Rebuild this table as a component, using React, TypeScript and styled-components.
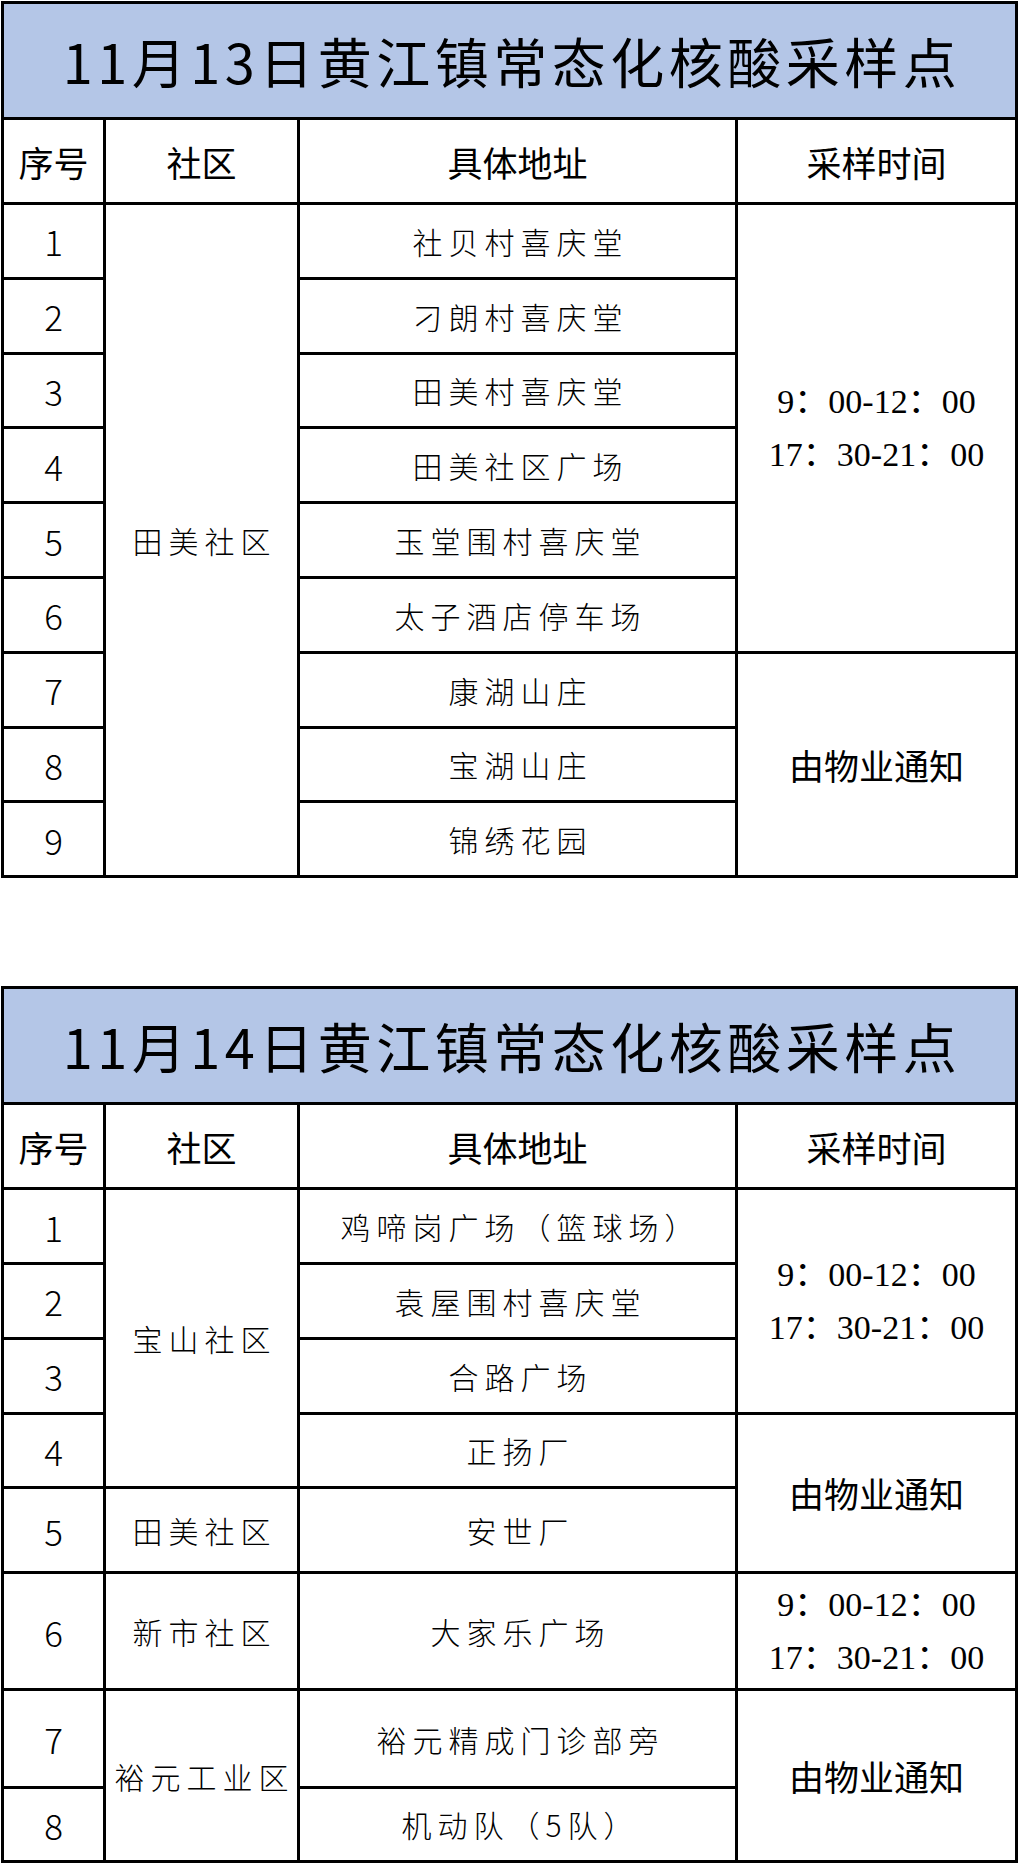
import React from 'react';
import styled, { createGlobalStyle } from 'styled-components';

// --- Estilos globales ---
const GlobalStyle = createGlobalStyle`
  html, body {
    margin: 0;
    padding: 0;
    background: #fff;
  }
  body {
    font-family: "Noto Sans CJK SC", sans-serif;
    color: #000;
  }
`;

const Page = styled.div`
  width: 1020px;
  display: flex;
  flex-direction: column;
  gap: 108px;
  padding-left: 1px;
  padding-top: 1px;
`;

const Sheet = styled.table`
  width: 1017px;
  border-collapse: collapse;
  table-layout: fixed;

  td, th {
    border: 3px solid #000;
    padding: 0;
    text-align: center;
    vertical-align: middle;
  }
`;

const TitleCell = styled.th`
  height: 113px;
  background: #b4c6e7;
  font-family: "Noto Sans CJK SC", sans-serif;
  font-size: 54px;
  font-weight: 400;
  letter-spacing: 4.5px;
  padding-left: 5px !important;
`;

const HeadCell = styled.th`
  height: 82px;
  font-family: "Noto Sans CJK SC", sans-serif;
  font-size: 35px;
  font-weight: 400;
`;

const Row = styled.tr<{ $h: number }>`
  height: ${(p) => p.$h}px;
`;

const NoCell = styled.td`
  font-family: "Noto Sans CJK SC", sans-serif;
  font-weight: 300;
  font-size: 35px;
`;

const TextCell = styled.td`
  font-family: "Noto Sans CJK SC", sans-serif;
  font-weight: 300;
  font-size: 30px;
  letter-spacing: 6px;
  padding-left: 6px !important;
  white-space: nowrap;
`;

const NoticeCell = styled.td`
  font-family: "Noto Sans CJK SC", sans-serif;
  font-size: 35px;
  font-weight: 400;
`;

const TimeCell = styled.td`
  font-family: "Liberation Serif", "Noto Sans CJK SC", serif;
  font-size: 34px;
`;

const TimeLine = styled.div`
  line-height: 53px;
  white-space: nowrap;
`;

type Slot = { kind: 'hours' | 'notice'; span: number };

type Site = {
  no: number;
  h: number;
  address: string;
  community?: { name: string; span: number };
  slot?: Slot;
};

type Day = { title: string; sites: Site[] };

const days: Day[] = [
  {
    title: '11月13日黄江镇常态化核酸采样点',
    sites: [
      { no: 1, h: 74.8, address: '社贝村喜庆堂', community: { name: '田美社区', span: 9 }, slot: { kind: 'hours', span: 6 } },
      { no: 2, h: 74.8, address: '刁朗村喜庆堂' },
      { no: 3, h: 74.8, address: '田美村喜庆堂' },
      { no: 4, h: 74.8, address: '田美社区广场' },
      { no: 5, h: 74.8, address: '玉堂围村喜庆堂' },
      { no: 6, h: 74.8, address: '太子酒店停车场' },
      { no: 7, h: 74.8, address: '康湖山庄', slot: { kind: 'notice', span: 3 } },
      { no: 8, h: 74.8, address: '宝湖山庄' },
      { no: 9, h: 74.8, address: '锦绣花园' },
    ],
  },
  {
    title: '11月14日黄江镇常态化核酸采样点',
    sites: [
      { no: 1, h: 74.8, address: '鸡啼岗广场（篮球场）', community: { name: '宝山社区', span: 4 }, slot: { kind: 'hours', span: 3 } },
      { no: 2, h: 74.8, address: '袁屋围村喜庆堂' },
      { no: 3, h: 74.8, address: '合路广场' },
      { no: 4, h: 74.8, address: '正扬厂', slot: { kind: 'notice', span: 2 } },
      { no: 5, h: 84.5, address: '安世厂', community: { name: '田美社区', span: 1 } },
      { no: 6, h: 117.5, address: '大家乐广场', community: { name: '新市社区', span: 1 }, slot: { kind: 'hours', span: 1 } },
      { no: 7, h: 97.5, address: '裕元精成门诊部旁', community: { name: '裕元工业区', span: 2 }, slot: { kind: 'notice', span: 2 } },
      { no: 8, h: 74, address: '机动队（5队）' },
    ],
  },
];

const SlotCell: React.FC<{ slot: Slot }> = ({ slot }) =>
  slot.kind === 'hours' ? (
    <TimeCell rowSpan={slot.span}>
      <TimeLine>9：00-12：00</TimeLine>
      <TimeLine>17：30-21：00</TimeLine>
    </TimeCell>
  ) : (
    <NoticeCell rowSpan={slot.span}>由物业通知</NoticeCell>
  );

const DaySheet: React.FC<{ day: Day }> = ({ day }) => (
  <Sheet>
    <colgroup>
      <col style={{ width: 102 }} />
      <col style={{ width: 194 }} />
      <col style={{ width: 438 }} />
      <col style={{ width: 280 }} />
    </colgroup>
    <tbody>
      <tr>
        <TitleCell colSpan={4}>{day.title}</TitleCell>
      </tr>
      <tr>
        <HeadCell>序号</HeadCell>
        <HeadCell>社区</HeadCell>
        <HeadCell>具体地址</HeadCell>
        <HeadCell>采样时间</HeadCell>
      </tr>
      {day.sites.map((s) => (
        <Row key={s.no} $h={s.h}>
          <NoCell>{s.no}</NoCell>
          {s.community && <TextCell rowSpan={s.community.span}>{s.community.name}</TextCell>}
          <TextCell>{s.address}</TextCell>
          {s.slot && <SlotCell slot={s.slot} />}
        </Row>
      ))}
    </tbody>
  </Sheet>
);

const App: React.FC = () => (
  <>
    <GlobalStyle />
    <Page>
      {days.map((d) => (
        <DaySheet key={d.title} day={d} />
      ))}
    </Page>
  </>
);

export default App;
